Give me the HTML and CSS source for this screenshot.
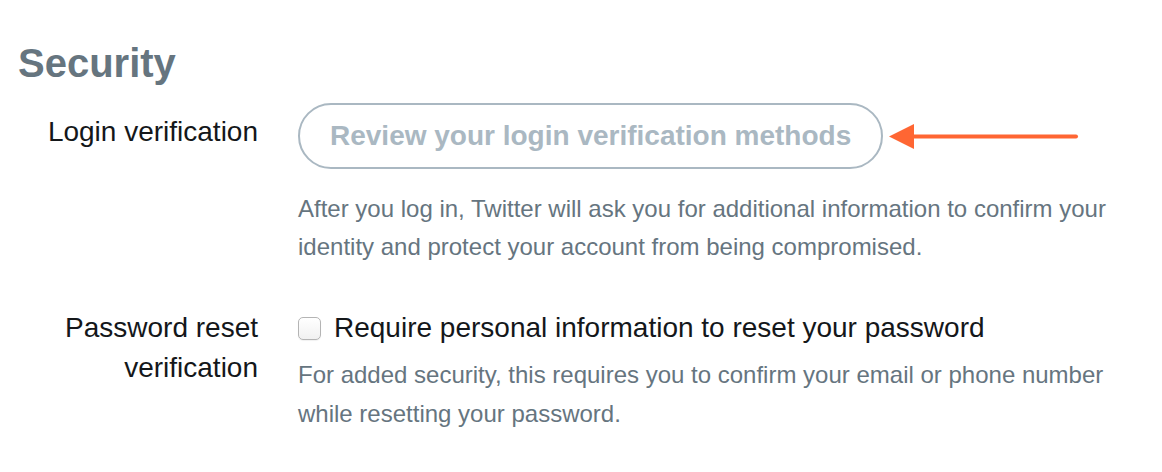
FILE: index.html
```html
<!DOCTYPE html>
<html lang="en">
<head>
    <meta charset="UTF-8">
    <meta name="viewport" content="width=device-width, initial-scale=1.0">
    <title>Security settings</title>
    <link rel="stylesheet" href="styles.css">
</head>
<body>
    <div class="settings">
        <h1 class="settings-title">Security</h1>

        <div class="setting-row">
            <div class="setting-label">Login verification</div>
            <div class="setting-control">
                <div class="button-wrap">
                    <button class="review-button" type="button">Review your login verification methods</button>
                    <svg class="callout-arrow" width="190" height="28" viewBox="0 0 190 28" aria-hidden="true">
                        <path d="M22 14.5 H187" stroke="#ff6633" stroke-width="4" stroke-linecap="round" />
                        <path d="M0 14.5 L25 2 L25 27 Z" fill="#ff6633" />
                    </svg>
                </div>
                <p class="setting-help">After you log in, Twitter will ask you for additional information to confirm your identity and protect your account from being compromised.</p>
            </div>
        </div>

        <div class="setting-row">
            <div class="setting-label">Password reset verification</div>
            <div class="setting-control">
                <label class="checkbox-line">
                    <input type="checkbox" class="checkbox" />
                    <span>Require personal information to reset your password</span>
                </label>
                <p class="setting-help setting-help-tight">For added security, this requires you to confirm your email or phone number while resetting your password.</p>
            </div>
        </div>
    </div>
</body>
</html>
```

FILE: styles.css
```css
body {
    margin: 0;
    font-family: "Liberation Sans", Arial, sans-serif;
    background-color: #ffffff;
    color: #14171a;
}
.settings {
    padding: 0 18px;
}
.settings-title {
    margin: 39px 0 16px;
    font-size: 40px;
    line-height: 48px;
    font-weight: bold;
    color: #66757f;
}
.setting-row {
    display: grid;
    grid-template-columns: 240px 1fr;
    column-gap: 40px;
    margin-bottom: 33px;
}
.setting-label {
    padding-top: 9px;
    font-size: 28px;
    line-height: 40px;
    text-align: right;
}
.setting-control {
    max-width: 830px;
}
.button-wrap {
    position: relative;
    display: inline-flex;
}
.review-button {
    height: 66px;
    padding: 0 30px;
    border: 2px solid #aab8c2;
    border-radius: 33px;
    background-color: #ffffff;
    font-family: inherit;
    font-size: 28px;
    font-weight: bold;
    line-height: 62px;
    color: #aab8c2;
    cursor: pointer;
}
.callout-arrow {
    position: absolute;
    left: calc(100% + 6px);
    top: 19px;
}
.setting-help {
    margin: 21px 0 0;
    font-size: 24px;
    line-height: 38px;
    color: #66757f;
}
.setting-help-tight {
    margin-top: 7px;
    line-height: 39px;
}
.checkbox-line {
    display: flex;
    align-items: center;
    gap: 13px;
    padding-top: 9px;
    font-size: 28px;
    line-height: 40px;
    cursor: pointer;
}
.checkbox {
    appearance: none;
    width: 23px;
    height: 23px;
    margin: 0;
    border: 1px solid #b4b4b4;
    border-radius: 5px;
    background: linear-gradient(#ffffff, #f1f1f1);
    box-shadow: 0 1px 1px rgba(0, 0, 0, 0.06);
}
```
